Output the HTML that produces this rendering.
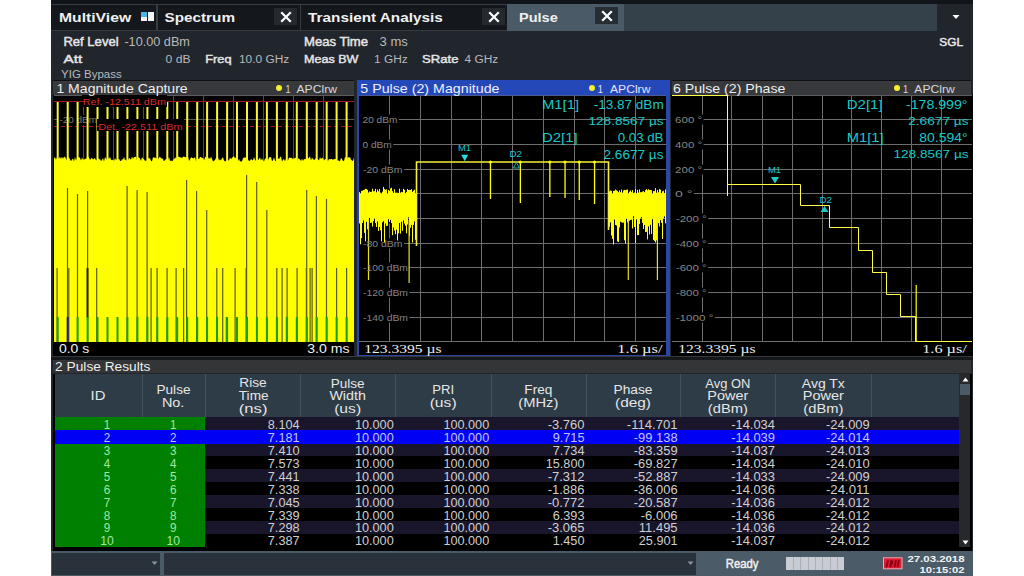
<!DOCTYPE html><html><head><meta charset="utf-8"><style>html,body{margin:0;padding:0}body{width:1024px;height:576px;overflow:hidden;position:relative;background:#fff}</style></head><body>
<div style="position:absolute;left:51px;top:0px;width:922px;height:576px;background:#21252c;"></div>
<div style="position:absolute;left:51px;top:0px;width:922px;height:4px;background:#111418;"></div>
<div style="position:absolute;left:51px;top:4px;width:456px;height:27px;background:#353c43;"></div>
<div style="position:absolute;left:51px;top:5px;width:105px;height:25px;background:#14181d;"></div>
<div style="position:absolute;left:158px;top:5px;width:142px;height:25px;background:#14181d;"></div>
<div style="position:absolute;left:301px;top:5px;width:206px;height:25px;background:#14181d;"></div>
<div style="position:absolute;left:274px;top:8px;width:23px;height:17px;background:#23292f;"></div>
<div style="position:absolute;left:482px;top:8px;width:23px;height:17px;background:#23292f;"></div>
<div style="position:absolute;left:507px;top:4px;width:117px;height:27px;background:#4b5a67;"></div>
<div style="position:absolute;left:595px;top:7px;width:23px;height:17px;background:#262d33;"></div>
<div style="position:absolute;left:624px;top:4px;width:313px;height:27px;background:#34414b;"></div>
<svg style="position:absolute;left:279.5px;top:10.5px" width="12" height="12"><path d="M2 2L10 10M10 2L2 10" stroke="#fff" stroke-width="2.2" stroke-linecap="square"/></svg>
<svg style="position:absolute;left:487.5px;top:10.5px" width="12" height="12"><path d="M2 2L10 10M10 2L2 10" stroke="#fff" stroke-width="2.2" stroke-linecap="square"/></svg>
<svg style="position:absolute;left:600.5px;top:9.5px" width="12" height="12"><path d="M2 2L10 10M10 2L2 10" stroke="#fff" stroke-width="2.2" stroke-linecap="square"/></svg>
<div style="position:absolute;left:141px;top:12px;width:6px;height:4.5px;background:#4cb4e4;"></div>
<div style="position:absolute;left:148px;top:12px;width:6px;height:4.5px;background:#f4f4f4;"></div>
<div style="position:absolute;left:141px;top:17px;width:6px;height:4px;background:#f4f4f4;"></div>
<div style="position:absolute;left:148px;top:17px;width:6px;height:4px;background:#f4f4f4;"></div>
<svg style="position:absolute;left:952px;top:14px" width="8" height="6"><path d="M0.5 1L7.5 1L4 5Z" fill="#fff"/></svg>
<div style="position:absolute;left:53px;top:80px;width:301px;height:16px;background:#37393c;"></div>
<div style="position:absolute;left:53px;top:80px;width:301px;height:1px;background:#0e1012;"></div>
<div style="position:absolute;left:53px;top:95px;width:301px;height:261px;background:#000;"></div>
<div style="position:absolute;left:51px;top:80px;width:2px;height:276px;background:#23272b;"></div>
<div style="position:absolute;left:275.8px;top:85px;width:6px;height:6px;border-radius:50%;background:#f4f030"></div>
<svg style="position:absolute;left:54px;top:95px" width="300" height="247"><line x1="29.5" y1="0" x2="29.5" y2="247" stroke="#4c4858" stroke-width="1"/><line x1="59.5" y1="0" x2="59.5" y2="247" stroke="#4c4858" stroke-width="1"/><line x1="89.5" y1="0" x2="89.5" y2="247" stroke="#4c4858" stroke-width="1"/><line x1="119.5" y1="0" x2="119.5" y2="247" stroke="#4c4858" stroke-width="1"/><line x1="149.5" y1="0" x2="149.5" y2="247" stroke="#4c4858" stroke-width="1"/><line x1="179.5" y1="0" x2="179.5" y2="247" stroke="#4c4858" stroke-width="1"/><line x1="209.5" y1="0" x2="209.5" y2="247" stroke="#4c4858" stroke-width="1"/><line x1="239.5" y1="0" x2="239.5" y2="247" stroke="#4c4858" stroke-width="1"/><line x1="269.5" y1="0" x2="269.5" y2="247" stroke="#4c4858" stroke-width="1"/><line x1="0" y1="0.5" x2="300" y2="0.5" stroke="#5c5c5c"/><line x1="0" y1="24.5" x2="300" y2="24.5" stroke="#5a5a5a"/><rect x="4" y="20" width="40" height="10" fill="#000"/><text x="5.40" y="28.00" font-family="Liberation Sans" font-size="9.16" font-weight="normal" fill="#7a7a7a" text-anchor="start" textLength="37.60" lengthAdjust="spacingAndGlyphs">-20 dBm</text><line x1="0" y1="6.5" x2="300" y2="6.5" stroke="#a81818" stroke-width="1"/><line x1="0" y1="31.5" x2="300" y2="31.5" stroke="#a81818" stroke-width="1" stroke-dasharray="4,3"/><rect x="2.7" y="7" width="2" height="60" fill="#f8f830"/><rect x="12.7" y="7" width="2" height="60" fill="#f8f830"/><rect x="22.6" y="7" width="2" height="60" fill="#f8f830"/><rect x="32.6" y="7" width="2" height="60" fill="#f8f830"/><rect x="42.5" y="7" width="2" height="60" fill="#f8f830"/><rect x="52.5" y="7" width="2" height="60" fill="#f8f830"/><rect x="62.5" y="7" width="2" height="60" fill="#f8f830"/><rect x="72.4" y="7" width="2" height="60" fill="#f8f830"/><rect x="82.4" y="7" width="2" height="60" fill="#f8f830"/><rect x="92.4" y="7" width="2" height="60" fill="#f8f830"/><rect x="102.3" y="7" width="2" height="60" fill="#f8f830"/><rect x="112.3" y="7" width="2" height="60" fill="#f8f830"/><rect x="122.2" y="7" width="2" height="60" fill="#f8f830"/><rect x="132.2" y="7" width="2" height="60" fill="#f8f830"/><rect x="142.2" y="7" width="2" height="60" fill="#f8f830"/><rect x="152.1" y="7" width="2" height="60" fill="#f8f830"/><rect x="162.1" y="7" width="2" height="60" fill="#f8f830"/><rect x="172.1" y="7" width="2" height="60" fill="#f8f830"/><rect x="182.0" y="7" width="2" height="60" fill="#f8f830"/><rect x="192.0" y="7" width="2" height="60" fill="#f8f830"/><rect x="201.9" y="7" width="2" height="60" fill="#f8f830"/><rect x="211.9" y="7" width="2" height="60" fill="#f8f830"/><rect x="221.9" y="7" width="2" height="60" fill="#f8f830"/><rect x="231.8" y="7" width="2" height="60" fill="#f8f830"/><rect x="241.8" y="7" width="2" height="60" fill="#f8f830"/><rect x="251.8" y="7" width="2" height="60" fill="#f8f830"/><rect x="261.7" y="7" width="2" height="60" fill="#f8f830"/><rect x="271.7" y="7" width="2" height="60" fill="#f8f830"/><rect x="281.6" y="7" width="2" height="60" fill="#f8f830"/><rect x="291.6" y="7" width="2" height="60" fill="#f8f830"/><polygon points="0,247 0.0,63.1 1.0,62.3 2.0,64.8 3.0,61.9 4.0,64.2 5.0,63.3 6.0,61.8 7.0,64.0 8.0,61.7 9.0,63.7 10.0,61.8 11.0,62.0 12.0,63.6 13.0,65.6 14.0,62.1 15.0,62.6 16.0,64.6 17.0,66.2 18.0,64.4 19.0,63.5 20.0,66.4 21.0,61.7 22.0,65.8 23.0,62.9 24.0,62.2 25.0,62.1 26.0,63.0 27.0,65.6 28.0,62.4 29.0,64.4 30.0,64.7 31.0,63.4 32.0,64.2 33.0,61.8 34.0,61.8 35.0,62.5 36.0,64.9 37.0,63.6 38.0,63.1 39.0,64.4 40.0,63.8 41.0,63.0 42.0,65.5 43.0,65.0 44.0,62.7 45.0,64.4 46.0,64.1 47.0,65.9 48.0,65.1 49.0,62.9 50.0,66.4 51.0,62.1 52.0,63.6 53.0,65.3 54.0,62.3 55.0,63.9 56.0,61.7 57.0,64.8 58.0,65.3 59.0,64.4 60.0,65.9 61.0,63.1 62.0,65.0 63.0,64.5 64.0,64.4 65.0,63.8 66.0,65.7 67.0,66.2 68.0,63.9 69.0,64.8 70.0,61.8 71.0,65.0 72.0,64.7 73.0,66.5 74.0,65.6 75.0,62.9 76.0,63.4 77.0,64.8 78.0,61.6 79.0,63.8 80.0,62.3 81.0,62.1 82.0,61.8 83.0,65.3 84.0,62.1 85.0,62.7 86.0,63.5 87.0,65.9 88.0,61.9 89.0,63.7 90.0,64.2 91.0,65.9 92.0,65.6 93.0,65.8 94.0,62.9 95.0,63.6 96.0,63.3 97.0,65.9 98.0,66.3 99.0,62.3 100.0,62.4 101.0,62.7 102.0,62.7 103.0,63.9 104.0,64.4 105.0,62.8 106.0,61.5 107.0,63.6 108.0,63.3 109.0,64.3 110.0,66.3 111.0,65.0 112.0,64.1 113.0,64.6 114.0,64.9 115.0,61.8 116.0,66.0 117.0,65.4 118.0,65.9 119.0,65.5 120.0,63.5 121.0,63.5 122.0,62.0 123.0,64.7 124.0,61.8 125.0,61.8 126.0,62.5 127.0,62.3 128.0,63.2 129.0,61.8 130.0,61.5 131.0,62.3 132.0,62.0 133.0,63.3 134.0,61.6 135.0,65.9 136.0,64.6 137.0,62.2 138.0,62.8 139.0,63.2 140.0,63.3 141.0,62.1 142.0,65.7 143.0,66.5 144.0,63.8 145.0,63.9 146.0,61.9 147.0,62.0 148.0,63.2 149.0,62.8 150.0,65.6 151.0,62.3 152.0,61.6 153.0,66.3 154.0,64.1 155.0,62.2 156.0,64.2 157.0,61.6 158.0,64.1 159.0,66.4 160.0,65.8 161.0,65.0 162.0,62.8 163.0,63.3 164.0,62.3 165.0,65.4 166.0,64.2 167.0,65.4 168.0,63.1 169.0,62.6 170.0,65.6 171.0,66.4 172.0,65.8 173.0,65.5 174.0,65.6 175.0,65.2 176.0,62.6 177.0,64.1 178.0,63.3 179.0,61.6 180.0,61.6 181.0,62.9 182.0,62.8 183.0,65.0 184.0,66.3 185.0,63.7 186.0,66.2 187.0,66.4 188.0,66.3 189.0,63.3 190.0,62.6 191.0,62.6 192.0,62.5 193.0,62.5 194.0,64.6 195.0,66.0 196.0,65.7 197.0,63.9 198.0,64.8 199.0,65.5 200.0,61.9 201.0,64.8 202.0,66.0 203.0,65.4 204.0,65.3 205.0,63.9 206.0,62.4 207.0,65.4 208.0,63.2 209.0,65.5 210.0,66.4 211.0,63.5 212.0,63.5 213.0,66.2 214.0,65.1 215.0,62.4 216.0,62.1 217.0,62.3 218.0,66.0 219.0,65.5 220.0,62.2 221.0,65.6 222.0,66.4 223.0,64.8 224.0,63.3 225.0,64.2 226.0,62.2 227.0,61.6 228.0,66.4 229.0,64.7 230.0,64.1 231.0,66.2 232.0,63.7 233.0,65.9 234.0,65.6 235.0,62.6 236.0,62.8 237.0,63.0 238.0,62.7 239.0,64.4 240.0,62.8 241.0,63.6 242.0,62.2 243.0,66.1 244.0,63.3 245.0,63.8 246.0,64.4 247.0,66.0 248.0,63.6 249.0,66.1 250.0,64.0 251.0,64.2 252.0,64.1 253.0,61.6 254.0,63.7 255.0,62.4 256.0,61.5 257.0,65.5 258.0,62.4 259.0,63.9 260.0,65.1 261.0,64.3 262.0,63.1 263.0,64.1 264.0,64.3 265.0,65.4 266.0,62.0 267.0,64.3 268.0,62.7 269.0,62.9 270.0,65.4 271.0,64.0 272.0,64.3 273.0,65.3 274.0,66.1 275.0,63.7 276.0,64.6 277.0,64.0 278.0,64.1 279.0,65.0 280.0,63.8 281.0,64.2 282.0,63.9 283.0,66.2 284.0,65.0 285.0,65.9 286.0,66.2 287.0,62.8 288.0,64.3 289.0,66.2 290.0,65.7 291.0,62.2 292.0,62.1 293.0,63.7 294.0,61.9 295.0,62.7 296.0,61.9 297.0,64.8 298.0,65.4 299.0,66.0 300.0,62.3 300,247" fill="#ffff00"/><rect x="28" y="0" width="85" height="12" fill="#000"/><line x1="28" y1="6.5" x2="30" y2="6.5" stroke="#a81818"/><rect x="43" y="24" width="87" height="12" fill="#000"/><line x1="43" y1="31.5" x2="45" y2="31.5" stroke="#a81818"/><rect x="12.9" y="93" width="1.2" height="154" fill="#5c5c12"/><rect x="22.9" y="99" width="1.2" height="148" fill="#5c5c12"/><rect x="33.0" y="96" width="1.2" height="151" fill="#5c5c12"/><rect x="72.5" y="91" width="1.2" height="156" fill="#5c5c12"/><rect x="82.5" y="95" width="1.2" height="152" fill="#5c5c12"/><rect x="92.5" y="97" width="1.2" height="150" fill="#5c5c12"/><rect x="132.0" y="85" width="1.2" height="162" fill="#5c5c12"/><rect x="142.0" y="96" width="1.2" height="151" fill="#5c5c12"/><rect x="152.1" y="115" width="1.2" height="132" fill="#5c5c12"/><rect x="192.0" y="80" width="1.2" height="167" fill="#5c5c12"/><rect x="202.1" y="87" width="1.2" height="160" fill="#5c5c12"/><rect x="212.2" y="115" width="1.2" height="132" fill="#5c5c12"/><rect x="252.1" y="95" width="1.2" height="152" fill="#5c5c12"/><rect x="261.8" y="101" width="1.2" height="146" fill="#5c5c12"/><rect x="271.9" y="104" width="1.2" height="143" fill="#5c5c12"/><rect x="2.5" y="173" width="1.2" height="74" fill="#5c5c12"/><rect x="14.2" y="173" width="1.2" height="74" fill="#5c5c12"/><rect x="42.1" y="173" width="1.2" height="74" fill="#5c5c12"/><rect x="96.5" y="173" width="1.2" height="74" fill="#5c5c12"/><rect x="102.5" y="173" width="1.2" height="74" fill="#5c5c12"/><rect x="112.5" y="173" width="1.2" height="74" fill="#5c5c12"/><rect x="121.5" y="173" width="1.2" height="74" fill="#5c5c12"/><rect x="129.0" y="173" width="1.2" height="74" fill="#5c5c12"/><rect x="162.2" y="173" width="1.2" height="74" fill="#5c5c12"/><rect x="168.1" y="173" width="1.2" height="74" fill="#5c5c12"/><rect x="180.5" y="173" width="1.2" height="74" fill="#5c5c12"/><rect x="191.5" y="173" width="1.2" height="74" fill="#5c5c12"/><rect x="222.2" y="173" width="1.2" height="74" fill="#5c5c12"/><rect x="227.5" y="173" width="1.2" height="74" fill="#5c5c12"/><rect x="232.5" y="173" width="1.2" height="74" fill="#5c5c12"/><rect x="242.5" y="173" width="1.2" height="74" fill="#5c5c12"/><rect x="251.8" y="173" width="1.2" height="74" fill="#5c5c12"/><rect x="255.5" y="173" width="1.2" height="74" fill="#5c5c12"/><rect x="257.5" y="173" width="1.2" height="74" fill="#5c5c12"/><rect x="282.0" y="173" width="1.2" height="74" fill="#5c5c12"/><rect x="292.0" y="173" width="1.2" height="74" fill="#5c5c12"/><rect x="32.5" y="173" width="2" height="50" fill="#202008"/><rect x="2.7" y="222" width="2" height="25" fill="#18a018"/><rect x="12.7" y="222" width="2" height="25" fill="#1818a8"/><rect x="22.6" y="222" width="2" height="25" fill="#18a018"/><rect x="32.6" y="222" width="2" height="25" fill="#18a018"/><rect x="42.5" y="222" width="2" height="25" fill="#18a018"/><rect x="52.5" y="222" width="2" height="25" fill="#18a018"/><rect x="62.5" y="222" width="2" height="25" fill="#18a018"/><rect x="72.4" y="222" width="2" height="25" fill="#18a018"/><rect x="82.4" y="222" width="2" height="25" fill="#18a018"/><rect x="92.4" y="222" width="2" height="25" fill="#18a018"/><rect x="102.3" y="222" width="2" height="25" fill="#18a018"/><rect x="112.3" y="222" width="2" height="25" fill="#18a018"/><rect x="122.2" y="222" width="2" height="25" fill="#18a018"/><rect x="132.2" y="222" width="2" height="25" fill="#18a018"/><rect x="142.2" y="222" width="2" height="25" fill="#18a018"/><rect x="152.1" y="222" width="2" height="25" fill="#18a018"/><rect x="162.1" y="222" width="2" height="25" fill="#18a018"/><rect x="172.1" y="222" width="2" height="25" fill="#18a018"/><rect x="182.0" y="222" width="2" height="25" fill="#18a018"/><rect x="192.0" y="222" width="2" height="25" fill="#18a018"/><rect x="201.9" y="222" width="2" height="25" fill="#18a018"/><rect x="211.9" y="222" width="2" height="25" fill="#18a018"/><rect x="221.9" y="222" width="2" height="25" fill="#18a018"/><rect x="231.8" y="222" width="2" height="25" fill="#18a018"/><rect x="241.8" y="222" width="2" height="25" fill="#18a018"/><rect x="251.8" y="222" width="2" height="25" fill="#18a018"/><rect x="261.7" y="222" width="2" height="25" fill="#18a018"/><rect x="271.7" y="222" width="2" height="25" fill="#18a018"/><rect x="281.6" y="222" width="2" height="25" fill="#18a018"/><rect x="291.6" y="222" width="2" height="25" fill="#18a018"/><rect x="171.7" y="222" width="2" height="25" fill="#18a018"/></svg>
<div style="position:absolute;left:357px;top:80px;width:313px;height:277px;background:#2a47a8;"></div>
<div style="position:absolute;left:357px;top:80px;width:312px;height:16px;background:#2448b8;"></div>
<div style="position:absolute;left:359px;top:95px;width:307px;height:260px;background:#000;"></div>
<div style="position:absolute;left:588.8px;top:85px;width:6px;height:6px;border-radius:50%;background:#f4f030"></div>
<svg style="position:absolute;left:359px;top:95px" width="307" height="247"><line x1="30.5" y1="0" x2="30.5" y2="247" stroke="#6e6e6e" stroke-width="1"/><line x1="61.5" y1="0" x2="61.5" y2="247" stroke="#6e6e6e" stroke-width="1"/><line x1="92.5" y1="0" x2="92.5" y2="247" stroke="#6e6e6e" stroke-width="1"/><line x1="122.5" y1="0" x2="122.5" y2="247" stroke="#6e6e6e" stroke-width="1"/><line x1="153.5" y1="0" x2="153.5" y2="247" stroke="#6e6e6e" stroke-width="1"/><line x1="184.5" y1="0" x2="184.5" y2="247" stroke="#6e6e6e" stroke-width="1"/><line x1="215.5" y1="0" x2="215.5" y2="247" stroke="#6e6e6e" stroke-width="1"/><line x1="245.5" y1="0" x2="245.5" y2="247" stroke="#6e6e6e" stroke-width="1"/><line x1="276.5" y1="0" x2="276.5" y2="247" stroke="#6e6e6e" stroke-width="1"/><line x1="0" y1="24.5" x2="307" y2="24.5" stroke="#6e6e6e" stroke-width="1"/><line x1="0" y1="49.5" x2="307" y2="49.5" stroke="#6e6e6e" stroke-width="1"/><line x1="0" y1="74.5" x2="307" y2="74.5" stroke="#6e6e6e" stroke-width="1"/><line x1="0" y1="98.5" x2="307" y2="98.5" stroke="#6e6e6e" stroke-width="1"/><line x1="0" y1="123.5" x2="307" y2="123.5" stroke="#6e6e6e" stroke-width="1"/><line x1="0" y1="148.5" x2="307" y2="148.5" stroke="#6e6e6e" stroke-width="1"/><line x1="0" y1="172.5" x2="307" y2="172.5" stroke="#6e6e6e" stroke-width="1"/><line x1="0" y1="197.5" x2="307" y2="197.5" stroke="#6e6e6e" stroke-width="1"/><line x1="0" y1="222.5" x2="307" y2="222.5" stroke="#6e6e6e" stroke-width="1"/><line x1="0" y1="246.5" x2="307" y2="246.5" stroke="#6e6e6e" stroke-width="1"/><line x1="0" y1="0.5" x2="307" y2="0.5" stroke="#4c5c90"/><rect x="0" y="19.5" width="39.9" height="10" fill="#000"/><rect x="0" y="44.5" width="34.3" height="10" fill="#000"/><rect x="0" y="69.5" width="45.0" height="10" fill="#000"/><rect x="0" y="93.5" width="45.0" height="10" fill="#000"/><rect x="0" y="118.5" width="45.0" height="10" fill="#000"/><rect x="0" y="143.5" width="45.0" height="10" fill="#000"/><rect x="0" y="167.5" width="50.4" height="10" fill="#000"/><rect x="0" y="192.5" width="50.4" height="10" fill="#000"/><rect x="0" y="217.5" width="50.4" height="10" fill="#000"/><rect x="0" y="97.1" width="1" height="31.4" fill="#ffff00"/><rect x="1" y="98.3" width="1" height="51.0" fill="#ffff00"/><rect x="2" y="95.9" width="1" height="47.2" fill="#ffff00"/><rect x="3" y="95.7" width="1" height="32.3" fill="#ffff00"/><rect x="4" y="95.1" width="1" height="30.3" fill="#ffff00"/><rect x="5" y="94.7" width="1" height="43.1" fill="#ffff00"/><rect x="6" y="93.8" width="1" height="52.5" fill="#ffff00"/><rect x="7" y="94.0" width="1" height="32.8" fill="#ffff00"/><rect x="8" y="94.9" width="1" height="39.4" fill="#ffff00"/><rect x="9" y="97.6" width="1" height="31.2" fill="#ffff00"/><rect x="10" y="96.4" width="1" height="26.6" fill="#ffff00"/><rect x="11" y="96.9" width="1" height="31.1" fill="#ffff00"/><rect x="12" y="96.7" width="1" height="31.0" fill="#ffff00"/><rect x="13" y="93.8" width="1" height="37.8" fill="#ffff00"/><rect x="14" y="96.3" width="1" height="29.8" fill="#ffff00"/><rect x="15" y="96.1" width="1" height="27.6" fill="#ffff00"/><rect x="16" y="93.8" width="1" height="34.3" fill="#ffff00"/><rect x="17" y="97.3" width="1" height="34.7" fill="#ffff00"/><rect x="18" y="94.5" width="1" height="31.9" fill="#ffff00"/><rect x="19" y="96.3" width="1" height="39.6" fill="#ffff00"/><rect x="20" y="94.0" width="1" height="38.0" fill="#ffff00"/><rect x="21" y="97.7" width="1" height="37.6" fill="#ffff00"/><rect x="22" y="98.4" width="1" height="48.0" fill="#ffff00"/><rect x="23" y="96.7" width="1" height="30.6" fill="#ffff00"/><rect x="24" y="91.9" width="1" height="34.1" fill="#ffff00"/><rect x="25" y="93.9" width="1" height="53.7" fill="#ffff00"/><rect x="26" y="94.9" width="1" height="33.6" fill="#ffff00"/><rect x="27" y="94.3" width="1" height="36.7" fill="#ffff00"/><rect x="28" y="98.4" width="1" height="32.3" fill="#ffff00"/><rect x="29" y="95.0" width="1" height="29.2" fill="#ffff00"/><rect x="30" y="95.9" width="1" height="31.2" fill="#ffff00"/><rect x="31" y="93.5" width="1" height="31.4" fill="#ffff00"/><rect x="32" y="92.8" width="1" height="35.3" fill="#ffff00"/><rect x="33" y="96.1" width="1" height="44.0" fill="#ffff00"/><rect x="34" y="97.9" width="1" height="34.5" fill="#ffff00"/><rect x="35" y="94.2" width="1" height="41.3" fill="#ffff00"/><rect x="36" y="97.7" width="1" height="41.5" fill="#ffff00"/><rect x="37" y="97.6" width="1" height="37.1" fill="#ffff00"/><rect x="38" y="97.7" width="1" height="47.7" fill="#ffff00"/><rect x="39" y="98.0" width="1" height="40.4" fill="#ffff00"/><rect x="40" y="93.7" width="1" height="34.3" fill="#ffff00"/><rect x="41" y="97.7" width="1" height="40.9" fill="#ffff00"/><rect x="42" y="96.9" width="1" height="29.9" fill="#ffff00"/><rect x="43" y="97.2" width="1" height="38.6" fill="#ffff00"/><rect x="44" y="93.8" width="1" height="31.6" fill="#ffff00"/><rect x="45" y="94.8" width="1" height="33.8" fill="#ffff00"/><rect x="46" y="98.4" width="1" height="32.3" fill="#ffff00"/><rect x="47" y="96.9" width="1" height="41.4" fill="#ffff00"/><rect x="48" y="93.9" width="1" height="35.6" fill="#ffff00"/><rect x="49" y="95.0" width="1" height="27.4" fill="#ffff00"/><rect x="50" y="94.8" width="1" height="46.2" fill="#ffff00"/><rect x="51" y="95.0" width="1" height="37.8" fill="#ffff00"/><rect x="52" y="94.1" width="1" height="35.8" fill="#ffff00"/><rect x="53" y="96.8" width="1" height="50.7" fill="#ffff00"/><rect x="54" y="95.7" width="1" height="34.1" fill="#ffff00"/><rect x="55" y="94.6" width="1" height="31.8" fill="#ffff00"/><rect x="56" y="98.3" width="1" height="46.5" fill="#ffff00"/><rect x="57" y="97.9" width="1" height="32.0" fill="#ffff00"/><rect x="8.9" y="125" width="1.2" height="60" fill="#e8e020"/><rect x="49.5" y="125" width="1.2" height="63" fill="#e8e020"/><rect x="250" y="96.4" width="1" height="35.3" fill="#ffff00"/><rect x="251" y="95.5" width="1" height="31.9" fill="#ffff00"/><rect x="252" y="95.9" width="1" height="44.7" fill="#ffff00"/><rect x="253" y="98.6" width="1" height="45.3" fill="#ffff00"/><rect x="254" y="95.9" width="1" height="53.6" fill="#ffff00"/><rect x="255" y="95.8" width="1" height="28.7" fill="#ffff00"/><rect x="256" y="94.5" width="1" height="35.5" fill="#ffff00"/><rect x="257" y="95.2" width="1" height="35.4" fill="#ffff00"/><rect x="258" y="95.9" width="1" height="50.5" fill="#ffff00"/><rect x="259" y="97.2" width="1" height="49.8" fill="#ffff00"/><rect x="260" y="95.4" width="1" height="37.1" fill="#ffff00"/><rect x="261" y="97.2" width="1" height="29.5" fill="#ffff00"/><rect x="262" y="94.6" width="1" height="32.7" fill="#ffff00"/><rect x="263" y="97.7" width="1" height="30.1" fill="#ffff00"/><rect x="264" y="95.5" width="1" height="32.1" fill="#ffff00"/><rect x="265" y="94.8" width="1" height="50.5" fill="#ffff00"/><rect x="266" y="95.1" width="1" height="53.5" fill="#ffff00"/><rect x="267" y="94.7" width="1" height="28.9" fill="#ffff00"/><rect x="268" y="94.5" width="1" height="32.8" fill="#ffff00"/><rect x="269" y="98.4" width="1" height="31.1" fill="#ffff00"/><rect x="270" y="96.6" width="1" height="29.2" fill="#ffff00"/><rect x="271" y="95.4" width="1" height="29.5" fill="#ffff00"/><rect x="272" y="97.1" width="1" height="27.6" fill="#ffff00"/><rect x="273" y="95.2" width="1" height="38.3" fill="#ffff00"/><rect x="274" y="98.2" width="1" height="23.0" fill="#ffff00"/><rect x="275" y="97.5" width="1" height="34.5" fill="#ffff00"/><rect x="276" y="94.0" width="1" height="54.1" fill="#ffff00"/><rect x="277" y="98.3" width="1" height="26.1" fill="#ffff00"/><rect x="278" y="94.8" width="1" height="45.4" fill="#ffff00"/><rect x="279" y="97.6" width="1" height="42.4" fill="#ffff00"/><rect x="280" y="94.4" width="1" height="34.5" fill="#ffff00"/><rect x="281" y="97.2" width="1" height="26.2" fill="#ffff00"/><rect x="282" y="97.2" width="1" height="25.0" fill="#ffff00"/><rect x="283" y="96.6" width="1" height="31.2" fill="#ffff00"/><rect x="284" y="96.1" width="1" height="37.9" fill="#ffff00"/><rect x="285" y="97.2" width="1" height="32.8" fill="#ffff00"/><rect x="286" y="95.2" width="1" height="41.9" fill="#ffff00"/><rect x="287" y="94.1" width="1" height="42.7" fill="#ffff00"/><rect x="288" y="95.3" width="1" height="49.1" fill="#ffff00"/><rect x="289" y="94.2" width="1" height="37.2" fill="#ffff00"/><rect x="290" y="95.0" width="1" height="44.5" fill="#ffff00"/><rect x="291" y="95.0" width="1" height="34.8" fill="#ffff00"/><rect x="292" y="95.2" width="1" height="43.7" fill="#ffff00"/><rect x="293" y="98.8" width="1" height="25.3" fill="#ffff00"/><rect x="294" y="96.1" width="1" height="48.8" fill="#ffff00"/><rect x="295" y="96.0" width="1" height="49.9" fill="#ffff00"/><rect x="296" y="93.1" width="1" height="54.3" fill="#ffff00"/><rect x="297" y="97.7" width="1" height="47.6" fill="#ffff00"/><rect x="298" y="94.9" width="1" height="41.9" fill="#ffff00"/><rect x="299" y="97.3" width="1" height="30.8" fill="#ffff00"/><rect x="300" y="94.0" width="1" height="37.4" fill="#ffff00"/><rect x="301" y="94.6" width="1" height="30.5" fill="#ffff00"/><rect x="302" y="98.1" width="1" height="29.7" fill="#ffff00"/><rect x="303" y="96.4" width="1" height="47.6" fill="#ffff00"/><rect x="304" y="95.8" width="1" height="27.7" fill="#ffff00"/><rect x="305" y="98.1" width="1" height="23.3" fill="#ffff00"/><rect x="306" y="94.3" width="1" height="34.0" fill="#ffff00"/><rect x="268.7" y="124" width="1.2" height="61" fill="#e8e020"/><rect x="297.8" y="124" width="1.2" height="61" fill="#e8e020"/><path d="M57.5 151 V67 H249.5 V135" stroke="#f4f038" stroke-width="1.6" fill="none"/><rect x="130.8" y="67" width="1.3" height="37" fill="#ffff00"/><circle cx="131.4" cy="67" r="1.6" fill="#ffff00"/><rect x="160.7" y="67" width="1.3" height="41" fill="#ffff00"/><circle cx="161.3" cy="67" r="1.6" fill="#ffff00"/><rect x="190.2" y="67" width="1.3" height="35" fill="#ffff00"/><circle cx="190.8" cy="67" r="1.6" fill="#ffff00"/><rect x="205.4" y="67" width="1.3" height="36" fill="#ffff00"/><circle cx="206.0" cy="67" r="1.6" fill="#ffff00"/><rect x="219.6" y="67" width="1.3" height="38" fill="#ffff00"/><circle cx="220.2" cy="67" r="1.6" fill="#ffff00"/><rect x="234.9" y="67" width="1.3" height="42" fill="#ffff00"/><circle cx="235.5" cy="67" r="1.6" fill="#ffff00"/><path d="M102.19999999999999 59.80000000000001 h7 l-3.5 6.5z" fill="#20e0e0"/><path d="M157.39999999999998 67.5 l-3 5.5 h6z" fill="none" stroke="#20b0b0" stroke-width="1"/></svg>
<div style="position:absolute;left:672px;top:80px;width:299px;height:16px;background:#37393c;"></div>
<div style="position:absolute;left:672px;top:80px;width:299px;height:1px;background:#0e1012;"></div>
<div style="position:absolute;left:671px;top:95px;width:302px;height:261px;background:#000;"></div>
<div style="position:absolute;left:893.5px;top:85px;width:6px;height:6px;border-radius:50%;background:#f4f030"></div>
<svg style="position:absolute;left:672px;top:95px" width="300" height="247"><line x1="30.5" y1="0" x2="30.5" y2="247" stroke="#6e6e6e" stroke-width="1"/><line x1="59.5" y1="0" x2="59.5" y2="247" stroke="#6e6e6e" stroke-width="1"/><line x1="90.5" y1="0" x2="90.5" y2="247" stroke="#6e6e6e" stroke-width="1"/><line x1="120.5" y1="0" x2="120.5" y2="247" stroke="#6e6e6e" stroke-width="1"/><line x1="150.5" y1="0" x2="150.5" y2="247" stroke="#6e6e6e" stroke-width="1"/><line x1="179.5" y1="0" x2="179.5" y2="247" stroke="#6e6e6e" stroke-width="1"/><line x1="209.5" y1="0" x2="209.5" y2="247" stroke="#6e6e6e" stroke-width="1"/><line x1="239.5" y1="0" x2="239.5" y2="247" stroke="#6e6e6e" stroke-width="1"/><line x1="269.5" y1="0" x2="269.5" y2="247" stroke="#6e6e6e" stroke-width="1"/><line x1="0" y1="24.5" x2="300" y2="24.5" stroke="#6e6e6e" stroke-width="1"/><line x1="0" y1="49.5" x2="300" y2="49.5" stroke="#6e6e6e" stroke-width="1"/><line x1="0" y1="74.5" x2="300" y2="74.5" stroke="#6e6e6e" stroke-width="1"/><line x1="0" y1="98.5" x2="300" y2="98.5" stroke="#6e6e6e" stroke-width="1"/><line x1="0" y1="123.5" x2="300" y2="123.5" stroke="#6e6e6e" stroke-width="1"/><line x1="0" y1="148.5" x2="300" y2="148.5" stroke="#6e6e6e" stroke-width="1"/><line x1="0" y1="172.5" x2="300" y2="172.5" stroke="#6e6e6e" stroke-width="1"/><line x1="0" y1="197.5" x2="300" y2="197.5" stroke="#6e6e6e" stroke-width="1"/><line x1="0" y1="222.5" x2="300" y2="222.5" stroke="#6e6e6e" stroke-width="1"/><line x1="0" y1="246.5" x2="300" y2="246.5" stroke="#6e6e6e" stroke-width="1"/><line x1="0" y1="0.5" x2="300" y2="0.5" stroke="#5c5c5c"/><rect x="0" y="19.5" width="31.6" height="10" fill="#000"/><rect x="0" y="44.5" width="31.6" height="10" fill="#000"/><rect x="0" y="69.5" width="31.6" height="10" fill="#000"/><rect x="0" y="93.5" width="22.0" height="10" fill="#000"/><rect x="0" y="118.5" width="36.2" height="10" fill="#000"/><rect x="0" y="143.5" width="36.2" height="10" fill="#000"/><rect x="0" y="167.5" width="36.2" height="10" fill="#000"/><rect x="0" y="192.5" width="36.2" height="10" fill="#000"/><rect x="0" y="217.5" width="42.9" height="10" fill="#000"/><path d="M0 0.5 H55.5 V101 M55.5 89.5 H128.5 V110.5 H157.5 V132.5 H186.5 V155.5 H200.5 V177.5 H214.5 V199.5 H228.5 V221.5 H243.5 V246.5 H300" stroke="#ffff48" stroke-width="1.0" fill="none"/><rect x="243.60000000000002" y="190" width="1.2" height="57" fill="#ffff00"/><path d="M99 82 h8 l-4 6.5z" fill="#1cc8c8"/><path d="M148.5 117 h8 l-4 -6z" fill="#1cc8c8"/></svg>
<div style="position:absolute;left:51px;top:356px;width:922px;height:1px;background:#34383c;"></div>
<div style="position:absolute;left:51px;top:357px;width:922px;height:3px;background:#15181a;"></div>
<div style="position:absolute;left:53px;top:360px;width:918px;height:13px;background:#333537;"></div>
<div style="position:absolute;left:53px;top:374px;width:919px;height:177px;background:#000;"></div>
<div style="position:absolute;left:55px;top:374px;width:904px;height:43px;background:#2e3c47;"></div>
<div style="position:absolute;left:142px;top:374px;width:1px;height:43px;background:#44515b;"></div>
<div style="position:absolute;left:205px;top:374px;width:1px;height:43px;background:#44515b;"></div>
<div style="position:absolute;left:300px;top:374px;width:1px;height:43px;background:#44515b;"></div>
<div style="position:absolute;left:395px;top:374px;width:1px;height:43px;background:#44515b;"></div>
<div style="position:absolute;left:491px;top:374px;width:1px;height:43px;background:#44515b;"></div>
<div style="position:absolute;left:586px;top:374px;width:1px;height:43px;background:#44515b;"></div>
<div style="position:absolute;left:680px;top:374px;width:1px;height:43px;background:#44515b;"></div>
<div style="position:absolute;left:775px;top:374px;width:1px;height:43px;background:#44515b;"></div>
<div style="position:absolute;left:871px;top:374px;width:1px;height:43px;background:#44515b;"></div>
<div style="position:absolute;left:55px;top:417.0px;width:904px;height:12.96px;background:#19152b;"></div>
<div style="position:absolute;left:55px;top:417.0px;width:150px;height:12.96px;background:#008000;"></div>
<div style="position:absolute;left:55px;top:442.92px;width:904px;height:12.96px;background:#19152b;"></div>
<div style="position:absolute;left:55px;top:442.92px;width:150px;height:12.96px;background:#008000;"></div>
<div style="position:absolute;left:55px;top:455.88px;width:904px;height:12.96px;background:#000;"></div>
<div style="position:absolute;left:55px;top:455.88px;width:150px;height:12.96px;background:#008000;"></div>
<div style="position:absolute;left:55px;top:468.84000000000003px;width:904px;height:12.96px;background:#19152b;"></div>
<div style="position:absolute;left:55px;top:468.84000000000003px;width:150px;height:12.96px;background:#008000;"></div>
<div style="position:absolute;left:55px;top:481.8px;width:904px;height:12.96px;background:#000;"></div>
<div style="position:absolute;left:55px;top:481.8px;width:150px;height:12.96px;background:#008000;"></div>
<div style="position:absolute;left:55px;top:494.76px;width:904px;height:12.96px;background:#19152b;"></div>
<div style="position:absolute;left:55px;top:494.76px;width:150px;height:12.96px;background:#008000;"></div>
<div style="position:absolute;left:55px;top:507.72px;width:904px;height:12.96px;background:#000;"></div>
<div style="position:absolute;left:55px;top:507.72px;width:150px;height:12.96px;background:#008000;"></div>
<div style="position:absolute;left:55px;top:520.6800000000001px;width:904px;height:12.96px;background:#19152b;"></div>
<div style="position:absolute;left:55px;top:520.6800000000001px;width:150px;height:12.96px;background:#008000;"></div>
<div style="position:absolute;left:55px;top:533.64px;width:904px;height:12.96px;background:#000;"></div>
<div style="position:absolute;left:55px;top:533.64px;width:150px;height:12.96px;background:#008000;"></div>
<div style="position:absolute;left:55px;top:429.65999999999997px;width:904px;height:13.96px;background:#0000f4;"></div>
<div style="position:absolute;left:959px;top:374px;width:11px;height:173px;background:#25292c;"></div>
<div style="position:absolute;left:960px;top:384px;width:10px;height:11px;background:#4b5a67;"></div>
<svg style="position:absolute;left:962px;top:377px" width="7" height="5"><path d="M0.5 4.5L6.5 4.5L3.5 0.5Z" fill="#fff"/></svg>
<svg style="position:absolute;left:962px;top:540px" width="7" height="5"><path d="M0.5 0.5L6.5 0.5L3.5 4.5Z" fill="#fff"/></svg>
<div style="position:absolute;left:51px;top:551px;width:922px;height:25px;background:#4b5b68;"></div>
<div style="position:absolute;left:52px;top:553px;width:108px;height:22px;background:#29323a;"></div>
<div style="position:absolute;left:164px;top:553px;width:532px;height:22px;background:#29323a;"></div>
<svg style="position:absolute;left:151px;top:561px" width="7" height="5"><path d="M0.5 0.5L6.5 0.5L3.5 4Z" fill="#8a949c"/></svg>
<svg style="position:absolute;left:687px;top:561px" width="7" height="5"><path d="M0.5 0.5L6.5 0.5L3.5 4Z" fill="#8a949c"/></svg>
<div style="position:absolute;left:786px;top:557px;width:58px;height:13px;background:#c9ccd2;"></div>
<div style="position:absolute;left:793px;top:557px;width:1px;height:13px;background:#abafb6;"></div>
<div style="position:absolute;left:800px;top:557px;width:1px;height:13px;background:#abafb6;"></div>
<div style="position:absolute;left:808px;top:557px;width:1px;height:13px;background:#abafb6;"></div>
<div style="position:absolute;left:815px;top:557px;width:1px;height:13px;background:#abafb6;"></div>
<div style="position:absolute;left:822px;top:557px;width:1px;height:13px;background:#abafb6;"></div>
<div style="position:absolute;left:830px;top:557px;width:1px;height:13px;background:#abafb6;"></div>
<div style="position:absolute;left:837px;top:557px;width:1px;height:13px;background:#abafb6;"></div>
<svg style="position:absolute;left:883px;top:557px" width="20" height="13"><rect x="0.5" y="0.8" width="18.5" height="11" fill="#e01c34" stroke="#f0a8b0" stroke-width="1"/><path d="M5 3 L3.5 10 M8.5 3 L7 10 L10 4 M13 3 L11.5 10 M16 3 L14.5 10" stroke="#8a0010" stroke-width="1.8" fill="none"/></svg>
<svg style="position:absolute;left:0;top:0" width="1024" height="576"><text x="59.00" y="22.00" font-family="Liberation Sans" font-size="12.50" font-weight="bold" fill="#f0f0f0" text-anchor="start" textLength="72.10" lengthAdjust="spacingAndGlyphs">MultiView</text><text x="164.50" y="22.00" font-family="Liberation Sans" font-size="12.50" font-weight="bold" fill="#f0f0f0" text-anchor="start" textLength="70.50" lengthAdjust="spacingAndGlyphs">Spectrum</text><text x="308.10" y="22.00" font-family="Liberation Sans" font-size="12.50" font-weight="bold" fill="#f0f0f0" text-anchor="start" textLength="134.60" lengthAdjust="spacingAndGlyphs">Transient Analysis</text><text x="519.00" y="21.70" font-family="Liberation Sans" font-size="12.50" font-weight="bold" fill="#f0f0f0" text-anchor="start" textLength="38.80" lengthAdjust="spacingAndGlyphs">Pulse</text><text x="939.30" y="45.80" font-family="Liberation Sans" font-size="11.48" font-weight="normal" fill="#e8e8e8" text-anchor="start" textLength="23.90" lengthAdjust="spacingAndGlyphs" stroke="#e8e8e8" stroke-width="0.45">SGL</text><text x="63.40" y="45.70" font-family="Liberation Sans" font-size="12.06" font-weight="normal" fill="#e4e4e4" text-anchor="start" textLength="55.20" lengthAdjust="spacingAndGlyphs" stroke="#e4e4e4" stroke-width="0.45">Ref Level</text><text x="124.40" y="45.70" font-family="Liberation Sans" font-size="12.06" font-weight="normal" fill="#b9b9b9" text-anchor="start" textLength="65.50" lengthAdjust="spacingAndGlyphs">-10.00 dBm</text><text x="63.50" y="62.90" font-family="Liberation Sans" font-size="11.63" font-weight="normal" fill="#e4e4e4" text-anchor="start" textLength="18.70" lengthAdjust="spacingAndGlyphs" stroke="#e4e4e4" stroke-width="0.45">Att</text><text x="165.50" y="63.00" font-family="Liberation Sans" font-size="11.63" font-weight="normal" fill="#b9b9b9" text-anchor="start" textLength="25.00" lengthAdjust="spacingAndGlyphs">0 dB</text><text x="205.30" y="63.00" font-family="Liberation Sans" font-size="11.63" font-weight="normal" fill="#e4e4e4" text-anchor="start" textLength="26.30" lengthAdjust="spacingAndGlyphs" stroke="#e4e4e4" stroke-width="0.45">Freq</text><text x="239.00" y="63.00" font-family="Liberation Sans" font-size="11.63" font-weight="normal" fill="#b9b9b9" text-anchor="start" textLength="50.20" lengthAdjust="spacingAndGlyphs">10.0 GHz</text><text x="61.10" y="77.60" font-family="Liberation Sans" font-size="11.05" font-weight="normal" fill="#b9b9b9" text-anchor="start" textLength="60.60" lengthAdjust="spacingAndGlyphs">YIG Bypass</text><text x="304.00" y="45.70" font-family="Liberation Sans" font-size="12.06" font-weight="normal" fill="#e4e4e4" text-anchor="start" textLength="64.00" lengthAdjust="spacingAndGlyphs" stroke="#e4e4e4" stroke-width="0.45">Meas Time</text><text x="379.50" y="45.70" font-family="Liberation Sans" font-size="12.06" font-weight="normal" fill="#b9b9b9" text-anchor="start" textLength="28.30" lengthAdjust="spacingAndGlyphs">3 ms</text><text x="304.00" y="63.00" font-family="Liberation Sans" font-size="11.63" font-weight="normal" fill="#e4e4e4" text-anchor="start" textLength="54.50" lengthAdjust="spacingAndGlyphs" stroke="#e4e4e4" stroke-width="0.45">Meas BW</text><text x="374.10" y="63.00" font-family="Liberation Sans" font-size="11.63" font-weight="normal" fill="#b9b9b9" text-anchor="start" textLength="33.70" lengthAdjust="spacingAndGlyphs">1 GHz</text><text x="422.10" y="63.00" font-family="Liberation Sans" font-size="11.63" font-weight="normal" fill="#e4e4e4" text-anchor="start" textLength="36.40" lengthAdjust="spacingAndGlyphs" stroke="#e4e4e4" stroke-width="0.45">SRate</text><text x="464.50" y="63.00" font-family="Liberation Sans" font-size="11.63" font-weight="normal" fill="#b9b9b9" text-anchor="start" textLength="33.70" lengthAdjust="spacingAndGlyphs">4 GHz</text><text x="56.40" y="92.60" font-family="Liberation Sans" font-size="12.35" font-weight="normal" fill="#eeeeee" text-anchor="start" textLength="131.30" lengthAdjust="spacingAndGlyphs">1 Magnitude Capture</text><text x="285.50" y="92.60" font-family="Liberation Sans" font-size="11.63" font-weight="normal" fill="#d8d8d8" text-anchor="start" textLength="5.00" lengthAdjust="spacingAndGlyphs">1</text><text x="296.50" y="92.60" font-family="Liberation Sans" font-size="11.63" font-weight="normal" fill="#d8d8d8" text-anchor="start" textLength="40.60" lengthAdjust="spacingAndGlyphs">APClrw</text><text x="82.80" y="105.40" font-family="Liberation Sans" font-size="9.16" font-weight="normal" fill="#dc2a2a" text-anchor="start" textLength="83.00" lengthAdjust="spacingAndGlyphs">Ref. -12.511 dBm</text><text x="98.20" y="129.90" font-family="Liberation Sans" font-size="9.59" font-weight="normal" fill="#dc2a2a" text-anchor="start" textLength="84.50" lengthAdjust="spacingAndGlyphs">Det. -22.511 dBm</text><text x="58.90" y="352.80" font-family="Liberation Sans" font-size="12.50" font-weight="normal" fill="#f0f0f0" text-anchor="start" textLength="30.30" lengthAdjust="spacingAndGlyphs">0.0 s</text><text x="307.30" y="352.80" font-family="Liberation Sans" font-size="12.50" font-weight="normal" fill="#f0f0f0" text-anchor="start" textLength="42.20" lengthAdjust="spacingAndGlyphs">3.0 ms</text><text x="360.30" y="92.70" font-family="Liberation Sans" font-size="11.92" font-weight="normal" fill="#f0f0ff" text-anchor="start" textLength="139.20" lengthAdjust="spacingAndGlyphs">5 Pulse (2) Magnitude</text><text x="597.80" y="92.60" font-family="Liberation Sans" font-size="11.63" font-weight="normal" fill="#e4e4ff" text-anchor="start" textLength="5.20" lengthAdjust="spacingAndGlyphs">1</text><text x="610.00" y="92.60" font-family="Liberation Sans" font-size="11.63" font-weight="normal" fill="#e4e4ff" text-anchor="start" textLength="40.40" lengthAdjust="spacingAndGlyphs">APClrw</text><text x="362.50" y="122.70" font-family="Liberation Sans" font-size="9.01" font-weight="normal" fill="#858585" text-anchor="start" textLength="34.90" lengthAdjust="spacingAndGlyphs">20 dBm</text><text x="362.50" y="147.70" font-family="Liberation Sans" font-size="9.01" font-weight="normal" fill="#858585" text-anchor="start" textLength="29.30" lengthAdjust="spacingAndGlyphs">0 dBm</text><text x="363.00" y="172.70" font-family="Liberation Sans" font-size="9.01" font-weight="normal" fill="#858585" text-anchor="start" textLength="39.50" lengthAdjust="spacingAndGlyphs">-20 dBm</text><text x="363.00" y="246.70" font-family="Liberation Sans" font-size="9.01" font-weight="normal" fill="#858585" text-anchor="start" textLength="39.50" lengthAdjust="spacingAndGlyphs">-80 dBm</text><text x="363.10" y="270.70" font-family="Liberation Sans" font-size="9.01" font-weight="normal" fill="#858585" text-anchor="start" textLength="44.80" lengthAdjust="spacingAndGlyphs">-100 dBm</text><text x="363.10" y="295.70" font-family="Liberation Sans" font-size="9.01" font-weight="normal" fill="#858585" text-anchor="start" textLength="44.80" lengthAdjust="spacingAndGlyphs">-120 dBm</text><text x="363.10" y="320.70" font-family="Liberation Sans" font-size="9.01" font-weight="normal" fill="#858585" text-anchor="start" textLength="44.80" lengthAdjust="spacingAndGlyphs">-140 dBm</text><text x="458.00" y="150.50" font-family="Liberation Sans" font-size="9.01" font-weight="normal" fill="#1cc8c8" text-anchor="start" textLength="13.00" lengthAdjust="spacingAndGlyphs">M1</text><text x="509.50" y="156.80" font-family="Liberation Sans" font-size="9.01" font-weight="normal" fill="#1cc8c8" text-anchor="start" textLength="12.50" lengthAdjust="spacingAndGlyphs">D2</text><text x="542.00" y="108.80" font-family="Liberation Sans" font-size="11.92" font-weight="normal" fill="#1cc8c8" text-anchor="start" textLength="37.00" lengthAdjust="spacingAndGlyphs">M1[1]</text><text x="593.70" y="108.80" font-family="Liberation Sans" font-size="11.92" font-weight="normal" fill="#1cc8c8" text-anchor="start" textLength="70.00" lengthAdjust="spacingAndGlyphs">-13.87 dBm</text><text x="588.50" y="125.00" font-family="Liberation Sans" font-size="11.63" font-weight="normal" fill="#1cc8c8" text-anchor="start" textLength="75.00" lengthAdjust="spacingAndGlyphs">128.8567 µs</text><text x="542.00" y="142.00" font-family="Liberation Sans" font-size="11.92" font-weight="normal" fill="#1cc8c8" text-anchor="start" textLength="35.70" lengthAdjust="spacingAndGlyphs">D2[1]</text><text x="617.70" y="142.00" font-family="Liberation Sans" font-size="11.92" font-weight="normal" fill="#1cc8c8" text-anchor="start" textLength="45.80" lengthAdjust="spacingAndGlyphs">0.03 dB</text><text x="603.50" y="158.60" font-family="Liberation Sans" font-size="11.92" font-weight="normal" fill="#1cc8c8" text-anchor="start" textLength="60.00" lengthAdjust="spacingAndGlyphs">2.6677 µs</text><text x="364.30" y="353.00" font-family="Liberation Serif" font-size="13.44" font-weight="normal" fill="#f0f0f0" text-anchor="start" textLength="77.20" lengthAdjust="spacingAndGlyphs">123.3395 µs</text><text x="617.30" y="352.80" font-family="Liberation Serif" font-size="13.44" font-weight="normal" fill="#f0f0f0" text-anchor="start" textLength="45.20" lengthAdjust="spacingAndGlyphs">1.6 µs/</text><text x="673.00" y="92.70" font-family="Liberation Sans" font-size="11.92" font-weight="normal" fill="#eeeeee" text-anchor="start" textLength="112.40" lengthAdjust="spacingAndGlyphs">6 Pulse (2) Phase</text><text x="903.00" y="92.60" font-family="Liberation Sans" font-size="11.63" font-weight="normal" fill="#d8d8d8" text-anchor="start" textLength="5.20" lengthAdjust="spacingAndGlyphs">1</text><text x="914.30" y="92.60" font-family="Liberation Sans" font-size="11.63" font-weight="normal" fill="#d8d8d8" text-anchor="start" textLength="40.40" lengthAdjust="spacingAndGlyphs">APClrw</text><text x="675.10" y="122.70" font-family="Liberation Sans" font-size="9.01" font-weight="normal" fill="#858585" text-anchor="start" textLength="27.00" lengthAdjust="spacingAndGlyphs">600 °</text><text x="675.10" y="147.70" font-family="Liberation Sans" font-size="9.01" font-weight="normal" fill="#858585" text-anchor="start" textLength="27.00" lengthAdjust="spacingAndGlyphs">400 °</text><text x="675.10" y="172.70" font-family="Liberation Sans" font-size="9.01" font-weight="normal" fill="#858585" text-anchor="start" textLength="27.00" lengthAdjust="spacingAndGlyphs">200 °</text><text x="675.10" y="196.70" font-family="Liberation Sans" font-size="9.01" font-weight="normal" fill="#858585" text-anchor="start" textLength="17.40" lengthAdjust="spacingAndGlyphs">0 °</text><text x="675.90" y="221.70" font-family="Liberation Sans" font-size="9.01" font-weight="normal" fill="#858585" text-anchor="start" textLength="30.80" lengthAdjust="spacingAndGlyphs">-200 °</text><text x="675.90" y="246.70" font-family="Liberation Sans" font-size="9.01" font-weight="normal" fill="#858585" text-anchor="start" textLength="30.80" lengthAdjust="spacingAndGlyphs">-400 °</text><text x="675.90" y="270.70" font-family="Liberation Sans" font-size="9.01" font-weight="normal" fill="#858585" text-anchor="start" textLength="30.80" lengthAdjust="spacingAndGlyphs">-600 °</text><text x="675.90" y="295.70" font-family="Liberation Sans" font-size="9.01" font-weight="normal" fill="#858585" text-anchor="start" textLength="30.80" lengthAdjust="spacingAndGlyphs">-800 °</text><text x="675.70" y="320.70" font-family="Liberation Sans" font-size="9.01" font-weight="normal" fill="#858585" text-anchor="start" textLength="37.70" lengthAdjust="spacingAndGlyphs">-1000 °</text><text x="768.00" y="172.80" font-family="Liberation Sans" font-size="9.01" font-weight="normal" fill="#1cc8c8" text-anchor="start" textLength="13.00" lengthAdjust="spacingAndGlyphs">M1</text><text x="819.50" y="202.50" font-family="Liberation Sans" font-size="9.01" font-weight="normal" fill="#1cc8c8" text-anchor="start" textLength="12.50" lengthAdjust="spacingAndGlyphs">D2</text><text x="846.70" y="109.10" font-family="Liberation Sans" font-size="11.92" font-weight="normal" fill="#1cc8c8" text-anchor="start" textLength="35.90" lengthAdjust="spacingAndGlyphs">D2[1]</text><text x="906.00" y="109.10" font-family="Liberation Sans" font-size="11.92" font-weight="normal" fill="#1cc8c8" text-anchor="start" textLength="61.50" lengthAdjust="spacingAndGlyphs">-178.999°</text><text x="908.20" y="125.00" font-family="Liberation Sans" font-size="11.63" font-weight="normal" fill="#1cc8c8" text-anchor="start" textLength="60.30" lengthAdjust="spacingAndGlyphs">2.6677 µs</text><text x="846.70" y="142.10" font-family="Liberation Sans" font-size="11.92" font-weight="normal" fill="#1cc8c8" text-anchor="start" textLength="37.00" lengthAdjust="spacingAndGlyphs">M1[1]</text><text x="919.30" y="142.10" font-family="Liberation Sans" font-size="11.92" font-weight="normal" fill="#1cc8c8" text-anchor="start" textLength="48.20" lengthAdjust="spacingAndGlyphs">80.594°</text><text x="893.50" y="158.20" font-family="Liberation Sans" font-size="11.63" font-weight="normal" fill="#1cc8c8" text-anchor="start" textLength="75.00" lengthAdjust="spacingAndGlyphs">128.8567 µs</text><text x="678.20" y="353.00" font-family="Liberation Serif" font-size="13.44" font-weight="normal" fill="#f0f0f0" text-anchor="start" textLength="77.30" lengthAdjust="spacingAndGlyphs">123.3395 µs</text><text x="922.20" y="353.00" font-family="Liberation Serif" font-size="13.44" font-weight="normal" fill="#f0f0f0" text-anchor="start" textLength="44.70" lengthAdjust="spacingAndGlyphs">1.6 µs/</text><text x="55.10" y="371.00" font-family="Liberation Sans" font-size="12.50" font-weight="normal" fill="#eeeeee" text-anchor="start" textLength="95.40" lengthAdjust="spacingAndGlyphs">2 Pulse Results</text><text x="90.60" y="400.00" font-family="Liberation Sans" font-size="12.50" font-weight="normal" fill="#e6e6e6" text-anchor="start" textLength="14.90" lengthAdjust="spacingAndGlyphs">ID</text><text x="156.50" y="393.50" font-family="Liberation Sans" font-size="12.50" font-weight="normal" fill="#e6e6e6" text-anchor="start" textLength="34.00" lengthAdjust="spacingAndGlyphs">Pulse</text><text x="161.90" y="406.70" font-family="Liberation Sans" font-size="12.50" font-weight="normal" fill="#e6e6e6" text-anchor="start" textLength="22.50" lengthAdjust="spacingAndGlyphs">No.</text><text x="239.30" y="387.40" font-family="Liberation Sans" font-size="12.50" font-weight="normal" fill="#e6e6e6" text-anchor="start" textLength="27.40" lengthAdjust="spacingAndGlyphs">Rise</text><text x="238.80" y="400.00" font-family="Liberation Sans" font-size="12.50" font-weight="normal" fill="#e6e6e6" text-anchor="start" textLength="29.80" lengthAdjust="spacingAndGlyphs">Time</text><text x="238.80" y="413.00" font-family="Liberation Sans" font-size="12.50" font-weight="normal" fill="#e6e6e6" text-anchor="start" textLength="28.70" lengthAdjust="spacingAndGlyphs">(ns)</text><text x="330.65" y="388.00" font-family="Liberation Sans" font-size="12.50" font-weight="normal" fill="#e6e6e6" text-anchor="start" textLength="34.00" lengthAdjust="spacingAndGlyphs">Pulse</text><text x="329.40" y="400.30" font-family="Liberation Sans" font-size="12.50" font-weight="normal" fill="#e6e6e6" text-anchor="start" textLength="36.50" lengthAdjust="spacingAndGlyphs">Width</text><text x="334.15" y="413.00" font-family="Liberation Sans" font-size="12.50" font-weight="normal" fill="#e6e6e6" text-anchor="start" textLength="27.00" lengthAdjust="spacingAndGlyphs">(us)</text><text x="432.15" y="393.50" font-family="Liberation Sans" font-size="12.50" font-weight="normal" fill="#e6e6e6" text-anchor="start" textLength="22.00" lengthAdjust="spacingAndGlyphs">PRI</text><text x="429.65" y="406.70" font-family="Liberation Sans" font-size="12.50" font-weight="normal" fill="#e6e6e6" text-anchor="start" textLength="27.00" lengthAdjust="spacingAndGlyphs">(us)</text><text x="524.35" y="393.50" font-family="Liberation Sans" font-size="12.50" font-weight="normal" fill="#e6e6e6" text-anchor="start" textLength="28.00" lengthAdjust="spacingAndGlyphs">Freq</text><text x="518.35" y="406.70" font-family="Liberation Sans" font-size="12.50" font-weight="normal" fill="#e6e6e6" text-anchor="start" textLength="40.00" lengthAdjust="spacingAndGlyphs">(MHz)</text><text x="613.50" y="393.50" font-family="Liberation Sans" font-size="12.50" font-weight="normal" fill="#e6e6e6" text-anchor="start" textLength="39.00" lengthAdjust="spacingAndGlyphs">Phase</text><text x="615.00" y="406.70" font-family="Liberation Sans" font-size="12.50" font-weight="normal" fill="#e6e6e6" text-anchor="start" textLength="36.00" lengthAdjust="spacingAndGlyphs">(deg)</text><text x="705.35" y="388.00" font-family="Liberation Sans" font-size="12.50" font-weight="normal" fill="#e6e6e6" text-anchor="start" textLength="45.00" lengthAdjust="spacingAndGlyphs">Avg ON</text><text x="707.35" y="400.30" font-family="Liberation Sans" font-size="12.50" font-weight="normal" fill="#e6e6e6" text-anchor="start" textLength="41.00" lengthAdjust="spacingAndGlyphs">Power</text><text x="707.85" y="413.00" font-family="Liberation Sans" font-size="12.50" font-weight="normal" fill="#e6e6e6" text-anchor="start" textLength="40.00" lengthAdjust="spacingAndGlyphs">(dBm)</text><text x="801.85" y="388.00" font-family="Liberation Sans" font-size="12.50" font-weight="normal" fill="#e6e6e6" text-anchor="start" textLength="43.00" lengthAdjust="spacingAndGlyphs">Avg Tx</text><text x="802.85" y="400.30" font-family="Liberation Sans" font-size="12.50" font-weight="normal" fill="#e6e6e6" text-anchor="start" textLength="41.00" lengthAdjust="spacingAndGlyphs">Power</text><text x="803.35" y="413.00" font-family="Liberation Sans" font-size="12.50" font-weight="normal" fill="#e6e6e6" text-anchor="start" textLength="40.00" lengthAdjust="spacingAndGlyphs">(dBm)</text><text x="103.75" y="428.80" font-family="Liberation Sans" font-size="12.35" font-weight="normal" fill="#a0e8a0" text-anchor="start" textLength="6.50" lengthAdjust="spacingAndGlyphs">1</text><text x="170.05" y="428.80" font-family="Liberation Sans" font-size="12.35" font-weight="normal" fill="#a0e8a0" text-anchor="start" textLength="6.50" lengthAdjust="spacingAndGlyphs">1</text><text x="299.60" y="428.80" font-family="Liberation Sans" font-size="12.35" font-weight="normal" fill="#cfcfcf" text-anchor="end" textLength="31.79" lengthAdjust="spacingAndGlyphs">8.104</text><text x="393.70" y="428.80" font-family="Liberation Sans" font-size="12.35" font-weight="normal" fill="#cfcfcf" text-anchor="end" textLength="38.78" lengthAdjust="spacingAndGlyphs">10.000</text><text x="489.20" y="428.80" font-family="Liberation Sans" font-size="12.35" font-weight="normal" fill="#cfcfcf" text-anchor="end" textLength="45.78" lengthAdjust="spacingAndGlyphs">100.000</text><text x="584.50" y="428.80" font-family="Liberation Sans" font-size="12.35" font-weight="normal" fill="#cfcfcf" text-anchor="end" textLength="36.79" lengthAdjust="spacingAndGlyphs">-3.760</text><text x="677.60" y="428.80" font-family="Liberation Sans" font-size="12.35" font-weight="normal" fill="#cfcfcf" text-anchor="end" textLength="50.78" lengthAdjust="spacingAndGlyphs">-114.701</text><text x="775.00" y="428.80" font-family="Liberation Sans" font-size="12.35" font-weight="normal" fill="#cfcfcf" text-anchor="end" textLength="43.79" lengthAdjust="spacingAndGlyphs">-14.034</text><text x="869.70" y="428.80" font-family="Liberation Sans" font-size="12.35" font-weight="normal" fill="#cfcfcf" text-anchor="end" textLength="43.79" lengthAdjust="spacingAndGlyphs">-24.009</text><text x="103.75" y="441.76" font-family="Liberation Sans" font-size="12.35" font-weight="normal" fill="#c4c4ff" text-anchor="start" textLength="6.50" lengthAdjust="spacingAndGlyphs">2</text><text x="170.05" y="441.76" font-family="Liberation Sans" font-size="12.35" font-weight="normal" fill="#c4c4ff" text-anchor="start" textLength="6.50" lengthAdjust="spacingAndGlyphs">2</text><text x="299.60" y="441.76" font-family="Liberation Sans" font-size="12.35" font-weight="normal" fill="#c4c4ff" text-anchor="end" textLength="31.79" lengthAdjust="spacingAndGlyphs">7.181</text><text x="393.70" y="441.76" font-family="Liberation Sans" font-size="12.35" font-weight="normal" fill="#c4c4ff" text-anchor="end" textLength="38.78" lengthAdjust="spacingAndGlyphs">10.000</text><text x="489.20" y="441.76" font-family="Liberation Sans" font-size="12.35" font-weight="normal" fill="#c4c4ff" text-anchor="end" textLength="45.78" lengthAdjust="spacingAndGlyphs">100.000</text><text x="584.50" y="441.76" font-family="Liberation Sans" font-size="12.35" font-weight="normal" fill="#c4c4ff" text-anchor="end" textLength="31.79" lengthAdjust="spacingAndGlyphs">9.715</text><text x="677.60" y="441.76" font-family="Liberation Sans" font-size="12.35" font-weight="normal" fill="#c4c4ff" text-anchor="end" textLength="43.79" lengthAdjust="spacingAndGlyphs">-99.138</text><text x="775.00" y="441.76" font-family="Liberation Sans" font-size="12.35" font-weight="normal" fill="#c4c4ff" text-anchor="end" textLength="43.79" lengthAdjust="spacingAndGlyphs">-14.039</text><text x="869.70" y="441.76" font-family="Liberation Sans" font-size="12.35" font-weight="normal" fill="#c4c4ff" text-anchor="end" textLength="43.79" lengthAdjust="spacingAndGlyphs">-24.014</text><text x="103.75" y="454.72" font-family="Liberation Sans" font-size="12.35" font-weight="normal" fill="#a0e8a0" text-anchor="start" textLength="6.50" lengthAdjust="spacingAndGlyphs">3</text><text x="170.05" y="454.72" font-family="Liberation Sans" font-size="12.35" font-weight="normal" fill="#a0e8a0" text-anchor="start" textLength="6.50" lengthAdjust="spacingAndGlyphs">3</text><text x="299.60" y="454.72" font-family="Liberation Sans" font-size="12.35" font-weight="normal" fill="#cfcfcf" text-anchor="end" textLength="31.79" lengthAdjust="spacingAndGlyphs">7.410</text><text x="393.70" y="454.72" font-family="Liberation Sans" font-size="12.35" font-weight="normal" fill="#cfcfcf" text-anchor="end" textLength="38.78" lengthAdjust="spacingAndGlyphs">10.000</text><text x="489.20" y="454.72" font-family="Liberation Sans" font-size="12.35" font-weight="normal" fill="#cfcfcf" text-anchor="end" textLength="45.78" lengthAdjust="spacingAndGlyphs">100.000</text><text x="584.50" y="454.72" font-family="Liberation Sans" font-size="12.35" font-weight="normal" fill="#cfcfcf" text-anchor="end" textLength="31.79" lengthAdjust="spacingAndGlyphs">7.734</text><text x="677.60" y="454.72" font-family="Liberation Sans" font-size="12.35" font-weight="normal" fill="#cfcfcf" text-anchor="end" textLength="43.79" lengthAdjust="spacingAndGlyphs">-83.359</text><text x="775.00" y="454.72" font-family="Liberation Sans" font-size="12.35" font-weight="normal" fill="#cfcfcf" text-anchor="end" textLength="43.79" lengthAdjust="spacingAndGlyphs">-14.037</text><text x="869.70" y="454.72" font-family="Liberation Sans" font-size="12.35" font-weight="normal" fill="#cfcfcf" text-anchor="end" textLength="43.79" lengthAdjust="spacingAndGlyphs">-24.013</text><text x="103.75" y="467.68" font-family="Liberation Sans" font-size="12.35" font-weight="normal" fill="#a0e8a0" text-anchor="start" textLength="6.50" lengthAdjust="spacingAndGlyphs">4</text><text x="170.05" y="467.68" font-family="Liberation Sans" font-size="12.35" font-weight="normal" fill="#a0e8a0" text-anchor="start" textLength="6.50" lengthAdjust="spacingAndGlyphs">4</text><text x="299.60" y="467.68" font-family="Liberation Sans" font-size="12.35" font-weight="normal" fill="#cfcfcf" text-anchor="end" textLength="31.79" lengthAdjust="spacingAndGlyphs">7.573</text><text x="393.70" y="467.68" font-family="Liberation Sans" font-size="12.35" font-weight="normal" fill="#cfcfcf" text-anchor="end" textLength="38.78" lengthAdjust="spacingAndGlyphs">10.000</text><text x="489.20" y="467.68" font-family="Liberation Sans" font-size="12.35" font-weight="normal" fill="#cfcfcf" text-anchor="end" textLength="45.78" lengthAdjust="spacingAndGlyphs">100.000</text><text x="584.50" y="467.68" font-family="Liberation Sans" font-size="12.35" font-weight="normal" fill="#cfcfcf" text-anchor="end" textLength="38.78" lengthAdjust="spacingAndGlyphs">15.800</text><text x="677.60" y="467.68" font-family="Liberation Sans" font-size="12.35" font-weight="normal" fill="#cfcfcf" text-anchor="end" textLength="43.79" lengthAdjust="spacingAndGlyphs">-69.827</text><text x="775.00" y="467.68" font-family="Liberation Sans" font-size="12.35" font-weight="normal" fill="#cfcfcf" text-anchor="end" textLength="43.79" lengthAdjust="spacingAndGlyphs">-14.034</text><text x="869.70" y="467.68" font-family="Liberation Sans" font-size="12.35" font-weight="normal" fill="#cfcfcf" text-anchor="end" textLength="43.79" lengthAdjust="spacingAndGlyphs">-24.010</text><text x="103.75" y="480.64" font-family="Liberation Sans" font-size="12.35" font-weight="normal" fill="#a0e8a0" text-anchor="start" textLength="6.50" lengthAdjust="spacingAndGlyphs">5</text><text x="170.05" y="480.64" font-family="Liberation Sans" font-size="12.35" font-weight="normal" fill="#a0e8a0" text-anchor="start" textLength="6.50" lengthAdjust="spacingAndGlyphs">5</text><text x="299.60" y="480.64" font-family="Liberation Sans" font-size="12.35" font-weight="normal" fill="#cfcfcf" text-anchor="end" textLength="31.79" lengthAdjust="spacingAndGlyphs">7.441</text><text x="393.70" y="480.64" font-family="Liberation Sans" font-size="12.35" font-weight="normal" fill="#cfcfcf" text-anchor="end" textLength="38.78" lengthAdjust="spacingAndGlyphs">10.000</text><text x="489.20" y="480.64" font-family="Liberation Sans" font-size="12.35" font-weight="normal" fill="#cfcfcf" text-anchor="end" textLength="45.78" lengthAdjust="spacingAndGlyphs">100.000</text><text x="584.50" y="480.64" font-family="Liberation Sans" font-size="12.35" font-weight="normal" fill="#cfcfcf" text-anchor="end" textLength="36.79" lengthAdjust="spacingAndGlyphs">-7.312</text><text x="677.60" y="480.64" font-family="Liberation Sans" font-size="12.35" font-weight="normal" fill="#cfcfcf" text-anchor="end" textLength="43.79" lengthAdjust="spacingAndGlyphs">-52.887</text><text x="775.00" y="480.64" font-family="Liberation Sans" font-size="12.35" font-weight="normal" fill="#cfcfcf" text-anchor="end" textLength="43.79" lengthAdjust="spacingAndGlyphs">-14.033</text><text x="869.70" y="480.64" font-family="Liberation Sans" font-size="12.35" font-weight="normal" fill="#cfcfcf" text-anchor="end" textLength="43.79" lengthAdjust="spacingAndGlyphs">-24.009</text><text x="103.75" y="493.60" font-family="Liberation Sans" font-size="12.35" font-weight="normal" fill="#a0e8a0" text-anchor="start" textLength="6.50" lengthAdjust="spacingAndGlyphs">6</text><text x="170.05" y="493.60" font-family="Liberation Sans" font-size="12.35" font-weight="normal" fill="#a0e8a0" text-anchor="start" textLength="6.50" lengthAdjust="spacingAndGlyphs">6</text><text x="299.60" y="493.60" font-family="Liberation Sans" font-size="12.35" font-weight="normal" fill="#cfcfcf" text-anchor="end" textLength="31.79" lengthAdjust="spacingAndGlyphs">7.338</text><text x="393.70" y="493.60" font-family="Liberation Sans" font-size="12.35" font-weight="normal" fill="#cfcfcf" text-anchor="end" textLength="38.78" lengthAdjust="spacingAndGlyphs">10.000</text><text x="489.20" y="493.60" font-family="Liberation Sans" font-size="12.35" font-weight="normal" fill="#cfcfcf" text-anchor="end" textLength="45.78" lengthAdjust="spacingAndGlyphs">100.000</text><text x="584.50" y="493.60" font-family="Liberation Sans" font-size="12.35" font-weight="normal" fill="#cfcfcf" text-anchor="end" textLength="36.79" lengthAdjust="spacingAndGlyphs">-1.886</text><text x="677.60" y="493.60" font-family="Liberation Sans" font-size="12.35" font-weight="normal" fill="#cfcfcf" text-anchor="end" textLength="43.79" lengthAdjust="spacingAndGlyphs">-36.006</text><text x="775.00" y="493.60" font-family="Liberation Sans" font-size="12.35" font-weight="normal" fill="#cfcfcf" text-anchor="end" textLength="43.79" lengthAdjust="spacingAndGlyphs">-14.036</text><text x="869.70" y="493.60" font-family="Liberation Sans" font-size="12.35" font-weight="normal" fill="#cfcfcf" text-anchor="end" textLength="43.79" lengthAdjust="spacingAndGlyphs">-24.011</text><text x="103.75" y="506.56" font-family="Liberation Sans" font-size="12.35" font-weight="normal" fill="#a0e8a0" text-anchor="start" textLength="6.50" lengthAdjust="spacingAndGlyphs">7</text><text x="170.05" y="506.56" font-family="Liberation Sans" font-size="12.35" font-weight="normal" fill="#a0e8a0" text-anchor="start" textLength="6.50" lengthAdjust="spacingAndGlyphs">7</text><text x="299.60" y="506.56" font-family="Liberation Sans" font-size="12.35" font-weight="normal" fill="#cfcfcf" text-anchor="end" textLength="31.79" lengthAdjust="spacingAndGlyphs">7.045</text><text x="393.70" y="506.56" font-family="Liberation Sans" font-size="12.35" font-weight="normal" fill="#cfcfcf" text-anchor="end" textLength="38.78" lengthAdjust="spacingAndGlyphs">10.000</text><text x="489.20" y="506.56" font-family="Liberation Sans" font-size="12.35" font-weight="normal" fill="#cfcfcf" text-anchor="end" textLength="45.78" lengthAdjust="spacingAndGlyphs">100.000</text><text x="584.50" y="506.56" font-family="Liberation Sans" font-size="12.35" font-weight="normal" fill="#cfcfcf" text-anchor="end" textLength="36.79" lengthAdjust="spacingAndGlyphs">-0.772</text><text x="677.60" y="506.56" font-family="Liberation Sans" font-size="12.35" font-weight="normal" fill="#cfcfcf" text-anchor="end" textLength="43.79" lengthAdjust="spacingAndGlyphs">-20.587</text><text x="775.00" y="506.56" font-family="Liberation Sans" font-size="12.35" font-weight="normal" fill="#cfcfcf" text-anchor="end" textLength="43.79" lengthAdjust="spacingAndGlyphs">-14.036</text><text x="869.70" y="506.56" font-family="Liberation Sans" font-size="12.35" font-weight="normal" fill="#cfcfcf" text-anchor="end" textLength="43.79" lengthAdjust="spacingAndGlyphs">-24.012</text><text x="103.75" y="519.52" font-family="Liberation Sans" font-size="12.35" font-weight="normal" fill="#a0e8a0" text-anchor="start" textLength="6.50" lengthAdjust="spacingAndGlyphs">8</text><text x="170.05" y="519.52" font-family="Liberation Sans" font-size="12.35" font-weight="normal" fill="#a0e8a0" text-anchor="start" textLength="6.50" lengthAdjust="spacingAndGlyphs">8</text><text x="299.60" y="519.52" font-family="Liberation Sans" font-size="12.35" font-weight="normal" fill="#cfcfcf" text-anchor="end" textLength="31.79" lengthAdjust="spacingAndGlyphs">7.339</text><text x="393.70" y="519.52" font-family="Liberation Sans" font-size="12.35" font-weight="normal" fill="#cfcfcf" text-anchor="end" textLength="38.78" lengthAdjust="spacingAndGlyphs">10.000</text><text x="489.20" y="519.52" font-family="Liberation Sans" font-size="12.35" font-weight="normal" fill="#cfcfcf" text-anchor="end" textLength="45.78" lengthAdjust="spacingAndGlyphs">100.000</text><text x="584.50" y="519.52" font-family="Liberation Sans" font-size="12.35" font-weight="normal" fill="#cfcfcf" text-anchor="end" textLength="31.79" lengthAdjust="spacingAndGlyphs">6.393</text><text x="677.60" y="519.52" font-family="Liberation Sans" font-size="12.35" font-weight="normal" fill="#cfcfcf" text-anchor="end" textLength="36.79" lengthAdjust="spacingAndGlyphs">-6.006</text><text x="775.00" y="519.52" font-family="Liberation Sans" font-size="12.35" font-weight="normal" fill="#cfcfcf" text-anchor="end" textLength="43.79" lengthAdjust="spacingAndGlyphs">-14.036</text><text x="869.70" y="519.52" font-family="Liberation Sans" font-size="12.35" font-weight="normal" fill="#cfcfcf" text-anchor="end" textLength="43.79" lengthAdjust="spacingAndGlyphs">-24.012</text><text x="103.75" y="532.48" font-family="Liberation Sans" font-size="12.35" font-weight="normal" fill="#a0e8a0" text-anchor="start" textLength="6.50" lengthAdjust="spacingAndGlyphs">9</text><text x="170.05" y="532.48" font-family="Liberation Sans" font-size="12.35" font-weight="normal" fill="#a0e8a0" text-anchor="start" textLength="6.50" lengthAdjust="spacingAndGlyphs">9</text><text x="299.60" y="532.48" font-family="Liberation Sans" font-size="12.35" font-weight="normal" fill="#cfcfcf" text-anchor="end" textLength="31.79" lengthAdjust="spacingAndGlyphs">7.298</text><text x="393.70" y="532.48" font-family="Liberation Sans" font-size="12.35" font-weight="normal" fill="#cfcfcf" text-anchor="end" textLength="38.78" lengthAdjust="spacingAndGlyphs">10.000</text><text x="489.20" y="532.48" font-family="Liberation Sans" font-size="12.35" font-weight="normal" fill="#cfcfcf" text-anchor="end" textLength="45.78" lengthAdjust="spacingAndGlyphs">100.000</text><text x="584.50" y="532.48" font-family="Liberation Sans" font-size="12.35" font-weight="normal" fill="#cfcfcf" text-anchor="end" textLength="36.79" lengthAdjust="spacingAndGlyphs">-3.065</text><text x="677.60" y="532.48" font-family="Liberation Sans" font-size="12.35" font-weight="normal" fill="#cfcfcf" text-anchor="end" textLength="38.78" lengthAdjust="spacingAndGlyphs">11.495</text><text x="775.00" y="532.48" font-family="Liberation Sans" font-size="12.35" font-weight="normal" fill="#cfcfcf" text-anchor="end" textLength="43.79" lengthAdjust="spacingAndGlyphs">-14.036</text><text x="869.70" y="532.48" font-family="Liberation Sans" font-size="12.35" font-weight="normal" fill="#cfcfcf" text-anchor="end" textLength="43.79" lengthAdjust="spacingAndGlyphs">-24.012</text><text x="100.25" y="545.44" font-family="Liberation Sans" font-size="12.35" font-weight="normal" fill="#a0e8a0" text-anchor="start" textLength="13.49" lengthAdjust="spacingAndGlyphs">10</text><text x="166.55" y="545.44" font-family="Liberation Sans" font-size="12.35" font-weight="normal" fill="#a0e8a0" text-anchor="start" textLength="13.49" lengthAdjust="spacingAndGlyphs">10</text><text x="299.60" y="545.44" font-family="Liberation Sans" font-size="12.35" font-weight="normal" fill="#cfcfcf" text-anchor="end" textLength="31.79" lengthAdjust="spacingAndGlyphs">7.387</text><text x="393.70" y="545.44" font-family="Liberation Sans" font-size="12.35" font-weight="normal" fill="#cfcfcf" text-anchor="end" textLength="38.78" lengthAdjust="spacingAndGlyphs">10.000</text><text x="489.20" y="545.44" font-family="Liberation Sans" font-size="12.35" font-weight="normal" fill="#cfcfcf" text-anchor="end" textLength="45.78" lengthAdjust="spacingAndGlyphs">100.000</text><text x="584.50" y="545.44" font-family="Liberation Sans" font-size="12.35" font-weight="normal" fill="#cfcfcf" text-anchor="end" textLength="31.79" lengthAdjust="spacingAndGlyphs">1.450</text><text x="677.60" y="545.44" font-family="Liberation Sans" font-size="12.35" font-weight="normal" fill="#cfcfcf" text-anchor="end" textLength="38.78" lengthAdjust="spacingAndGlyphs">25.901</text><text x="775.00" y="545.44" font-family="Liberation Sans" font-size="12.35" font-weight="normal" fill="#cfcfcf" text-anchor="end" textLength="43.79" lengthAdjust="spacingAndGlyphs">-14.037</text><text x="869.70" y="545.44" font-family="Liberation Sans" font-size="12.35" font-weight="normal" fill="#cfcfcf" text-anchor="end" textLength="43.79" lengthAdjust="spacingAndGlyphs">-24.012</text><text x="725.80" y="568.00" font-family="Liberation Sans" font-size="11.92" font-weight="normal" fill="#f0f0f0" text-anchor="start" textLength="32.70" lengthAdjust="spacingAndGlyphs" stroke="#f0f0f0" stroke-width="0.45">Ready</text><text x="907.40" y="562.20" font-family="Liberation Sans" font-size="9.01" font-weight="bold" fill="#f2f2f2" text-anchor="start" textLength="57.20" lengthAdjust="spacingAndGlyphs">27.03.2018</text><text x="919.50" y="573.00" font-family="Liberation Sans" font-size="9.01" font-weight="bold" fill="#f2f2f2" text-anchor="start" textLength="45.10" lengthAdjust="spacingAndGlyphs">10:15:02</text></svg>
</body></html>
